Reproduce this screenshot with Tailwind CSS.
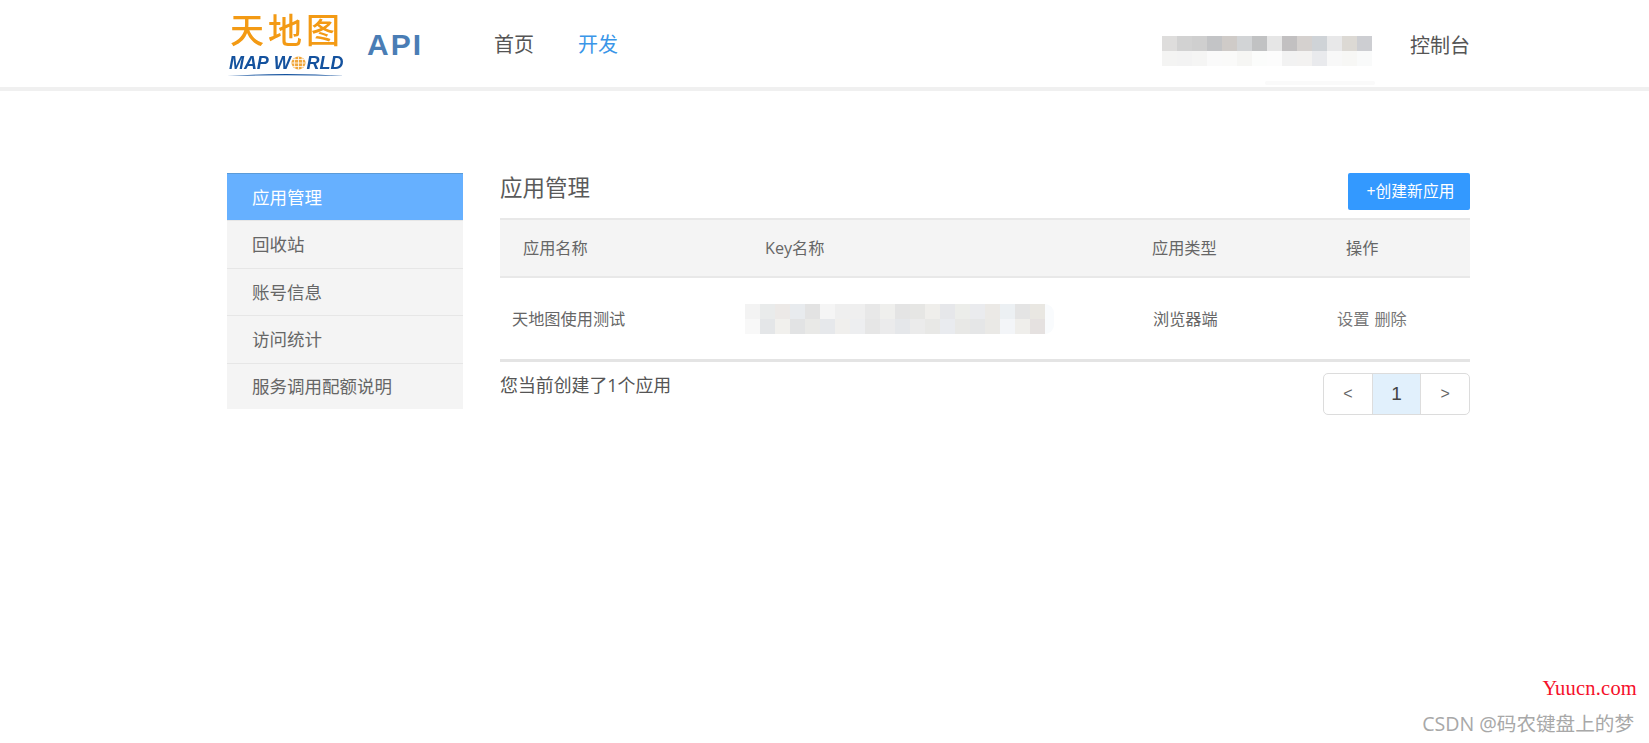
<!DOCTYPE html>
<html lang="zh">
<head>
<meta charset="utf-8">
<script src="https://cdn.jsdelivr.net/npm/@tailwindcss/browser@4"></script>
<title>天地图 API</title>
</head>
<body class="bg-white font-['Open_Sans','Noto_Sans_CJK_SC',sans-serif] text-[#555]">
<div class="h-[743px] w-[1649px] relative overflow-hidden">
  <header class="h-[91px] border-b-4 border-[#f0f0f0] bg-white relative">
    <div class="ml-[227px] w-[1243px] flex h-[87px] items-center">
      <div class="w-[118px] h-[64px] relative shrink-0 mt-[8px] blur-[0.4px]">
        <div class="absolute left-[3px] top-[-10px] whitespace-nowrap text-[34px] leading-[46px] tracking-[4px] font-medium text-[#f39a14] font-['Noto_Sans_CJK_SC',sans-serif]">天地图</div>
        <div class="absolute left-[2px] top-[37px] flex items-center whitespace-nowrap text-[18px] leading-[20px] italic font-bold tracking-[-0.1px] text-[#14529e] font-['Liberation_Sans',sans-serif]">
          <span>MAP</span><span class="ml-[5px]">W</span>
          <svg class="mx-[0.5px]" width="15" height="14" viewBox="0 0 15 14"><ellipse cx="7.5" cy="7" rx="7" ry="6.5" fill="#f0a63a"/><path d="M1 7H14M2 3.5H13M2 10.5H13M7.5 .5V13.5M4 1.5Q2.5 7 4 12.5M11 1.5Q12.5 7 11 12.5" stroke="#fff" stroke-width=".8" fill="none"/></svg>
          <span>RLD</span>
        </div>
        <svg class="absolute left-0 top-[56px]" width="118" height="6" viewBox="0 0 118 6"><path d="M0 4 Q59 0 118 4 Q59 2.5 0 4Z" fill="#14529e"/></svg>
      </div>
      <div class="ml-[22px] mt-[3px] text-[30px] font-bold tracking-[2px] text-[#4a7db5] font-['Liberation_Sans',sans-serif] leading-none">API</div>
      <nav class="ml-[71px] flex gap-[44px] text-[20px] leading-none mt-[3px]">
        <a class="text-[#555]">首页</a>
        <a class="text-[#3a96e8]">开发</a>
      </nav>
      <div class="ml-auto flex flex-col mt-[15px]">
        <div class="flex">
          <i class="block w-[15px] h-[15px] bg-[#dedddc]"></i><i class="block w-[15px] h-[15px] bg-[#d2d2d2]"></i><i class="block w-[15px] h-[15px] bg-[#cfcfcf]"></i><i class="block w-[15px] h-[15px] bg-[#c3c4c6]"></i><i class="block w-[15px] h-[15px] bg-[#cfcbc8]"></i><i class="block w-[15px] h-[15px] bg-[#d2d4d6]"></i><i class="block w-[15px] h-[15px] bg-[#c1c2c3]"></i><i class="block w-[15px] h-[15px] bg-[#e6e6e6]"></i><i class="block w-[15px] h-[15px] bg-[#c2c0c1]"></i><i class="block w-[15px] h-[15px] bg-[#d5d1cf]"></i><i class="block w-[15px] h-[15px] bg-[#cfd3d7]"></i><i class="block w-[15px] h-[15px] bg-[#e8e8e9]"></i><i class="block w-[15px] h-[15px] bg-[#dcd9d4]"></i><i class="block w-[15px] h-[15px] bg-[#cdced2]"></i>
        </div>
        <div class="flex">
          <i class="block w-[15px] h-[15px] bg-[#f4f4f3]"></i><i class="block w-[15px] h-[15px] bg-[#f3f3f3]"></i><i class="block w-[15px] h-[15px] bg-[#f5f5f4]"></i><i class="block w-[15px] h-[15px] bg-[#fafafa]"></i><i class="block w-[15px] h-[15px] bg-[#fafaf9]"></i><i class="block w-[15px] h-[15px] bg-[#f6f6f4]"></i><i class="block w-[15px] h-[15px] bg-[#fbfcfb]"></i><i class="block w-[15px] h-[15px] bg-[#fcfcfc]"></i><i class="block w-[15px] h-[15px] bg-[#f2f2f2]"></i><i class="block w-[15px] h-[15px] bg-[#f3f2f1]"></i><i class="block w-[15px] h-[15px] bg-[#e9eaed]"></i><i class="block w-[15px] h-[15px] bg-[#f8f8f8]"></i><i class="block w-[15px] h-[15px] bg-[#f7f7f5]"></i><i class="block w-[15px] h-[15px] bg-[#f9fafa]"></i>
        </div>
      </div>
      <a class="ml-[38px] mt-[5px] text-[20px] leading-none text-[#555]">控制台</a>
    </div>
    <div class="absolute left-[1265px] top-[81px] h-[4px] w-[110px] rounded-full bg-[#fafafa]"></div>
  </header>

  <div class="ml-[227px] w-[1243px] mt-[82px] flex gap-[37px]">
    <aside class="w-[236px] shrink-0 text-[17.5px] text-[#666]">
      <div class="h-[47px] flex items-center pl-[25px] bg-[#66b0ff] text-white border-t border-[#5b9bd8]">应用管理</div>
      <div class="h-[47.5px] flex items-center pl-[25px] bg-[#f4f4f4] border-t border-[#e6e6e6]">回收站</div>
      <div class="h-[47.5px] flex items-center pl-[25px] bg-[#f4f4f4] border-t border-[#e6e6e6]">账号信息</div>
      <div class="h-[47.5px] flex items-center pl-[25px] bg-[#f4f4f4] border-t border-[#e6e6e6]">访问统计</div>
      <div class="h-[46.5px] flex items-center pl-[25px] bg-[#f4f4f4] border-t border-[#e6e6e6]">服务调用配额说明</div>
    </aside>

    <main class="flex-1 min-w-0">
      <div class="flex h-[45px] items-start justify-between">
        <h1 class="text-[22.5px] leading-[30px] text-[#5a5a5a]">应用管理</h1>
        <button class="h-[37px] w-[122px] rounded-[2px] bg-[#3399ff] pl-[3px] text-[15.8px] text-white">+创建新应用</button>
      </div>
      <div class="grid grid-cols-[231px_387px_194px_158px] h-[60px] items-center border-y-2 border-[#e8e8e8] bg-[#f4f4f4] text-[16.2px] text-[#666]">
        <div class="pl-[23px] pt-[1px]">应用名称</div>
        <div class="pl-[34px] pt-[1px]">Key名称</div>
        <div class="pl-[34px] pt-[1px]">应用类型</div>
        <div class="pl-[34px] pt-[1px]">操作</div>
      </div>
      <div class="grid grid-cols-[231px_387px_194px_158px] h-[84px] items-center border-b-[3px] border-[#e4e4e4] text-[16.2px] text-[#666]">
        <div class="pl-[12px] pt-[1px]">天地图使用测试</div>
        <div class="pl-[14px] pt-[1px]">
          <div class="flex">
            <i class="block w-[15px] h-[15px] bg-[#f3f3f3]"></i><i class="block w-[15px] h-[15px] bg-[#e9ebeb]"></i><i class="block w-[15px] h-[15px] bg-[#ece9e7]"></i><i class="block w-[15px] h-[15px] bg-[#e8ebee]"></i><i class="block w-[15px] h-[15px] bg-[#e3e3e3]"></i><i class="block w-[15px] h-[15px] bg-[#f5f5f5]"></i><i class="block w-[15px] h-[15px] bg-[#efefef]"></i><i class="block w-[15px] h-[15px] bg-[#efefef]"></i><i class="block w-[15px] h-[15px] bg-[#e8e8e8]"></i><i class="block w-[15px] h-[15px] bg-[#efefed]"></i><i class="block w-[15px] h-[15px] bg-[#e4e4e4]"></i><i class="block w-[15px] h-[15px] bg-[#e6e6e4]"></i><i class="block w-[15px] h-[15px] bg-[#efeeeb]"></i><i class="block w-[15px] h-[15px] bg-[#e6e7ea]"></i><i class="block w-[15px] h-[15px] bg-[#ecedea]"></i><i class="block w-[15px] h-[15px] bg-[#eaebee]"></i><i class="block w-[15px] h-[15px] bg-[#ebe9e6]"></i><i class="block w-[15px] h-[15px] bg-[#ecf0f3]"></i><i class="block w-[15px] h-[15px] bg-[#e4e4e4]"></i><i class="block w-[15px] h-[15px] bg-[#e9e7e2]"></i><i class="block w-[9px] h-[15px] rounded-tr-full bg-[#f9fbfd]"></i>
          </div>
          <div class="flex">
            <i class="block w-[15px] h-[15px] bg-[#f8f8f8]"></i><i class="block w-[15px] h-[15px] bg-[#e4e6e8]"></i><i class="block w-[15px] h-[15px] bg-[#f1f0ed]"></i><i class="block w-[15px] h-[15px] bg-[#e2e3e4]"></i><i class="block w-[15px] h-[15px] bg-[#e9e9e7]"></i><i class="block w-[15px] h-[15px] bg-[#e6e8eb]"></i><i class="block w-[15px] h-[15px] bg-[#f0efed]"></i><i class="block w-[15px] h-[15px] bg-[#edeef0]"></i><i class="block w-[15px] h-[15px] bg-[#e6e6e6]"></i><i class="block w-[15px] h-[15px] bg-[#ebebec]"></i><i class="block w-[15px] h-[15px] bg-[#e5e7ea]"></i><i class="block w-[15px] h-[15px] bg-[#ebebeb]"></i><i class="block w-[15px] h-[15px] bg-[#e8e8e6]"></i><i class="block w-[15px] h-[15px] bg-[#e9ebef]"></i><i class="block w-[15px] h-[15px] bg-[#e8e8e6]"></i><i class="block w-[15px] h-[15px] bg-[#e5e6e7]"></i><i class="block w-[15px] h-[15px] bg-[#eae9e6]"></i><i class="block w-[15px] h-[15px] bg-[#f3f5f8]"></i><i class="block w-[15px] h-[15px] bg-[#efeeeb]"></i><i class="block w-[15px] h-[15px] bg-[#e5e1e0]"></i><i class="block w-[9px] h-[15px] rounded-br-full bg-[#f9fbfd]"></i>
          </div>
        </div>
        <div class="pl-[35px] pt-[1px]">浏览器端</div>
        <div class="pl-[25px] pt-[1px] flex gap-[5px] text-[#777]"><a>设置</a><a>删除</a></div>
      </div>
      <div class="flex items-start justify-between pt-[11px]">
        <p class="text-[17.9px] leading-[24px] text-[#555]">您当前创建了1个应用</p>
        <div class="flex h-[42px] w-[147px] rounded-[5px] border-[1.5px] border-[#dcdcdc] text-[#666] divide-x divide-[#dddddd] font-['Liberation_Sans',sans-serif]">
          <a class="flex-1 flex items-center justify-center text-[16px]">&lt;</a>
          <a class="flex-1 flex items-center justify-center text-[19px] text-[#444] bg-[#e1f0fc]">1</a>
          <a class="flex-1 flex items-center justify-center text-[16px]">&gt;</a>
        </div>
      </div>
    </main>
  </div>

  <div class="absolute right-[12px] top-[677px] text-[20.5px] leading-[22px] font-normal tracking-[0.2px] text-[#f5102a] font-['Liberation_Serif',serif]">Yuucn.com</div>
  <div class="absolute right-[15px] top-[713px] text-[19.6px] leading-[22px] text-[#a8a8a8]">CSDN @码农键盘上的梦</div>
</div>
</body>
</html>
